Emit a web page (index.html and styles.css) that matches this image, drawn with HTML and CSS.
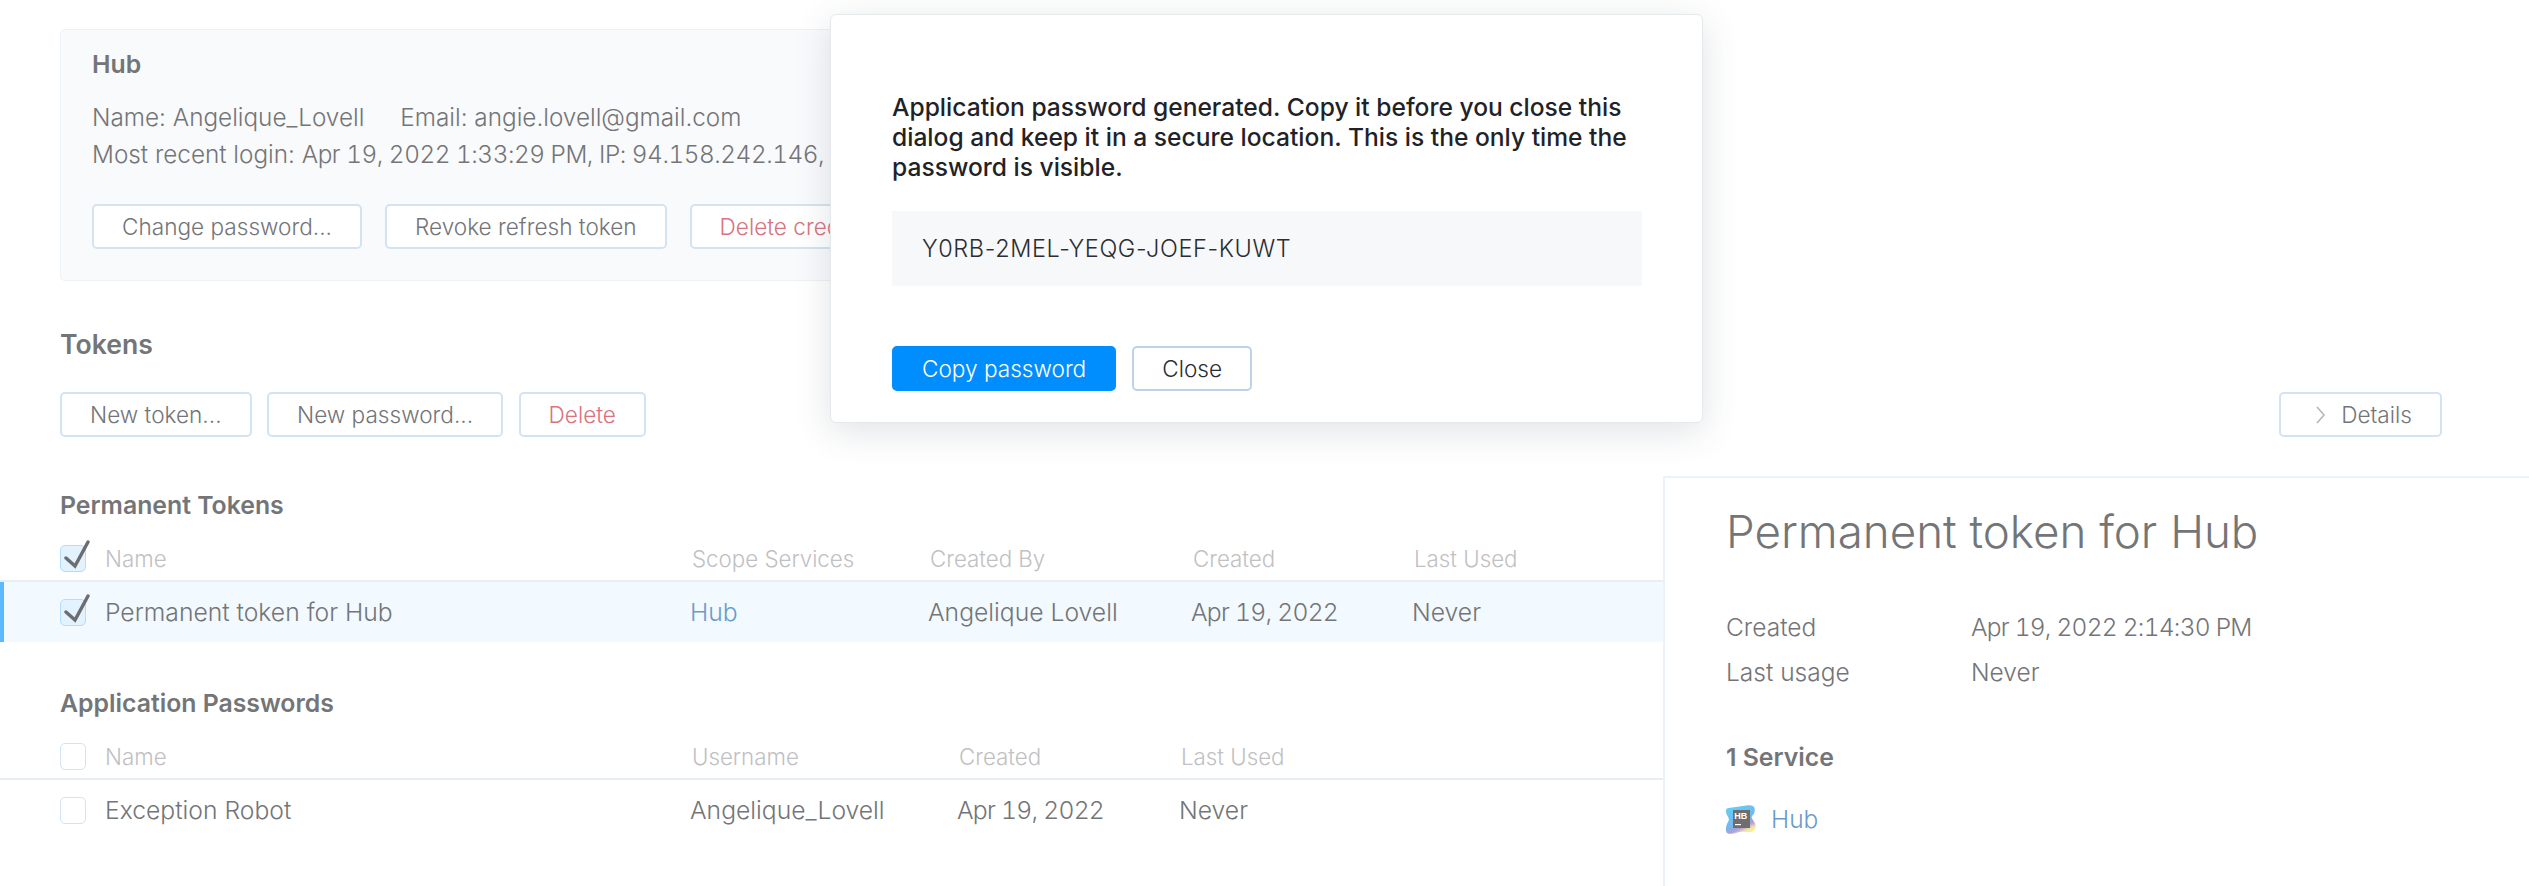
FILE: index.html
```html
<!DOCTYPE html>
<html lang="en">
<head>
<meta charset="utf-8">
<title>Tokens</title>
<link rel="stylesheet" href="styles.css">
</head>
<body>
<main class="page">
  <section class="card">
    <h3 class="card-title">Hub</h3>
    <p class="card-line"><span class="gap">Name: Angelique_Lovell</span><span>Email: angie.lovell@gmail.com</span></p>
    <p class="card-line">Most recent login: <span class="num login">Apr 19, 2022 1:33:29 PM, IP: 94.158.242.146, B</span></p>
    <div class="btn-row card-actions">
      <button class="btn">Change password...</button>
      <button class="btn">Revoke refresh token</button>
      <button class="btn danger">Delete credentials...</button>
    </div>
  </section>

  <h2 class="heading">Tokens</h2>
  <div class="toolbar">
    <div class="btn-row tight">
      <button class="btn">New token...</button>
      <button class="btn">New password...</button>
      <button class="btn danger">Delete</button>
    </div>
    <button class="btn details">
      <svg class="chev" viewBox="0 0 12 20" width="12" height="20"><path d="M2 2l7 8-7 8" fill="none" stroke="#b5b7b9" stroke-width="1.6"/></svg>
      Details
    </button>
  </div>

  <h3 class="group-title first">Permanent Tokens</h3>
  <div class="row head tokens">
    <span class="cb on"><svg class="tick" viewBox="0 0 30 30"><path d="M5 18l9 8L27 2" fill="none" stroke="#6b6d70" stroke-width="3.4" stroke-linecap="round"/></svg></span>
    <span>Name</span><span class="hc">Scope Services</span><span class="hc">Created By</span><span class="hc">Created</span><span class="hc">Last Used</span>
  </div>
  <div class="row body tokens selected">
    <span class="cb on"><svg class="tick" viewBox="0 0 30 30"><path d="M5 18l9 8L27 2" fill="none" stroke="#6b6d70" stroke-width="3.4" stroke-linecap="round"/></svg></span>
    <span>Permanent token for Hub</span><span class="link">Hub</span><span>Angelique Lovell</span><span class="num">Apr 19, 2022</span><span>Never</span>
  </div>

  <h3 class="group-title second">Application Passwords</h3>
  <div class="row head passwords">
    <span class="cb"></span>
    <span>Name</span><span class="hc">Username</span><span class="hc">Created</span><span class="hc">Last Used</span>
  </div>
  <div class="row body passwords">
    <span class="cb"></span>
    <span>Exception Robot</span><span>Angelique_Lovell</span><span class="num">Apr 19, 2022</span><span>Never</span>
  </div>
</main>

<aside class="sidebar">
  <h1 class="side-title">Permanent token for Hub</h1>
  <dl class="facts">
    <dt>Created</dt><dd class="num">Apr 19, 2022 2:14:30 PM</dd>
    <dt>Last usage</dt><dd>Never</dd>
  </dl>
  <h3 class="side-sub">1 Service</h3>
  <div class="service">
    <svg class="logo" viewBox="0 0 30 30" width="30" height="30">
      <defs>
        <linearGradient id="hb" x1="0.3" y1="0" x2="0.8" y2="1">
          <stop offset="0" stop-color="#62cdf6"/><stop offset=".55" stop-color="#79b6ea"/><stop offset=".72" stop-color="#b39ddb"/><stop offset=".86" stop-color="#f3e7a2"/><stop offset="1" stop-color="#fdf28a"/>
        </linearGradient>
      </defs>
      <path d="M0 6C0 2 4 3 10 2c6-1 14-3 17-1 3 2 2 8-1 10-1 2 1 4 3 7 2 4 0 8-4 9-4 1-7-1-11 0-4 1-10 3-13 1-2-2-1-8 1-11 2-3 0-5-1-7-1-2-1-3-1-5z" fill="url(#hb)"/>
      <rect x="7" y="5" width="17" height="18" fill="#6e6e6e"/>
      <text x="8.2" y="13.5" class="logo-text">HB</text>
      <rect x="9" y="19" width="6" height="1.2" fill="#fff"/>
    </svg>
    <span class="link">Hub</span>
  </div>
</aside>

<div class="dialog" role="dialog">
  <p class="dialog-text">Application password generated. Copy it before you close this dialog and keep it in a secure location. This is the only time the password is visible.</p>
  <div class="secret">Y0RB-2MEL-YEQG-JOEF-KUWT</div>
  <div class="dialog-actions">
    <button class="btn primary">Copy password</button>
    <button class="btn plain">Close</button>
  </div>
</div>
</body>
</html>
```

FILE: styles.css
```css
* { box-sizing: border-box; }
html, body { margin: 0; height: 100%; }
body {
  position: relative;
  height: 886px;
  overflow: hidden;
  background: #fff;
  color: #737577;
  font-family: Inter, "Liberation Sans", sans-serif;
  font-size: 24.5px;
  font-weight: 300;
  line-height: 37px;
}
h1, h2, h3, p, dl, dd { margin: 0; font: inherit; }
.num { font-variant-numeric: tabular-nums; letter-spacing: -.75px; }
.num.login { letter-spacing: -.45px; }
.page { padding: 29px 87px 0 60px; }

.card {
  width: 1300px;
  height: 252px;
  padding: 16px 31px 0;
  background: #f9fafc;
  border: 1px solid #eef1f5;
  border-radius: 5px;
}
.card-title { font-size: 24.8px; font-weight: 600; margin-bottom: 16px; }
.card-line { white-space: nowrap; font-size: 24.3px; }
.gap { margin-right: 36px; }
.btn-row { display: flex; gap: 23px; }
.btn-row.tight { gap: 15.5px; }
.card-actions { margin-top: 31px; }

.btn {
  height: 45px;
  padding: 0 28px;
  font: inherit;
  font-size: 22.6px;
  line-height: 41px;
  color: #737577;
  background: #fff;
  border: 2px solid #d3e3f1;
  border-radius: 5px;
  white-space: nowrap;
}
.btn.danger { color: #d9737e; }

.heading { margin-top: 43px; font-size: 26.6px; font-weight: 600; line-height: 40px; }
.toolbar { display: flex; justify-content: space-between; margin-top: 28px; }
.details { display: flex; align-items: center; gap: 14px; padding: 0 28px 0 34px; }
.chev { display: block; }

.group-title { font-size: 24.8px; font-weight: 600; line-height: 30px; }
.first { margin-top: 53px; }
.second { margin-top: 46px; }

.row { display: grid; align-items: center; margin-left: -60px; padding-left: 60px; white-space: nowrap; }
.tokens { grid-template-columns: 45px 585px 238px 263px 221px 1fr; }
.passwords { grid-template-columns: 45px 585px 267px 222px 1fr; }
.row.head { height: 44px; margin-top: 18px; border-bottom: 2px solid #e9eef3; color: #bfc1c3; font-size: 22.3px; padding-bottom: 2px; }
.row.body { height: 60px; font-size: 24.7px; }
.hc { padding-left: 2px; }
.selected { background: #f2f9ff; box-shadow: inset 4px 0 0 #5cb8ff; }
.link { color: #6a9ccb; }

.cb {
  position: relative;
  display: block;
  width: 26px;
  height: 27px;
  background: #fff;
  border: 1px solid #d3e3f1;
  border-radius: 5px;
}
.cb.on { background: #e3f2ff; border-color: #b3dcff; }
.tick { position: absolute; left: 0; top: -6px; width: 30px; height: 30px; }

.sidebar {
  position: absolute;
  left: 1663px;
  right: 0;
  top: 476px;
  bottom: 0;
  padding: 28px 0 0 61px;
  background: #fff;
  border-top: 2px solid #edf2f7;
  border-left: 2px solid #edf2f7;
}
.side-title { font-size: 45.7px; line-height: 52px; }
.facts {
  display: grid;
  grid-template-columns: 245px 1fr;
  row-gap: 8px;
  margin-top: 51px;
}
.side-sub { margin-top: 48px; font-size: 24.8px; font-weight: 600; }
.service { display: flex; align-items: center; gap: 15px; margin-top: 25px; }
.logo { display: block; }
.logo-text { font: 700 9px "Liberation Sans", sans-serif; fill: #fff; }

.dialog {
  position: absolute;
  left: 830px;
  top: 14px;
  width: 873px;
  height: 409px;
  padding: 77px 61px 0;
  background: #fff;
  border: 1px solid #e6e9ec;
  border-radius: 6px;
  box-shadow: 0 8px 36px rgba(60, 75, 95, .16);
}
.dialog-text { color: #1f2328; font-size: 24.6px; font-weight: 500; line-height: 30px; width: 750px; }
.secret {
  margin-top: 29px;
  width: 750px;
  height: 75px;
  padding-left: 30px;
  background: #f7f8fa;
  color: #2a2d31;
  font-size: 23.5px;
  line-height: 75px;
  letter-spacing: .6px;
}
.dialog-actions { display: flex; gap: 16px; margin-top: 60px; }
.btn.primary { color: #fff; background: #008eff; border-color: #008eff; }
.btn.plain { color: #2a2d31; border-color: #bcd3e8; }
```
